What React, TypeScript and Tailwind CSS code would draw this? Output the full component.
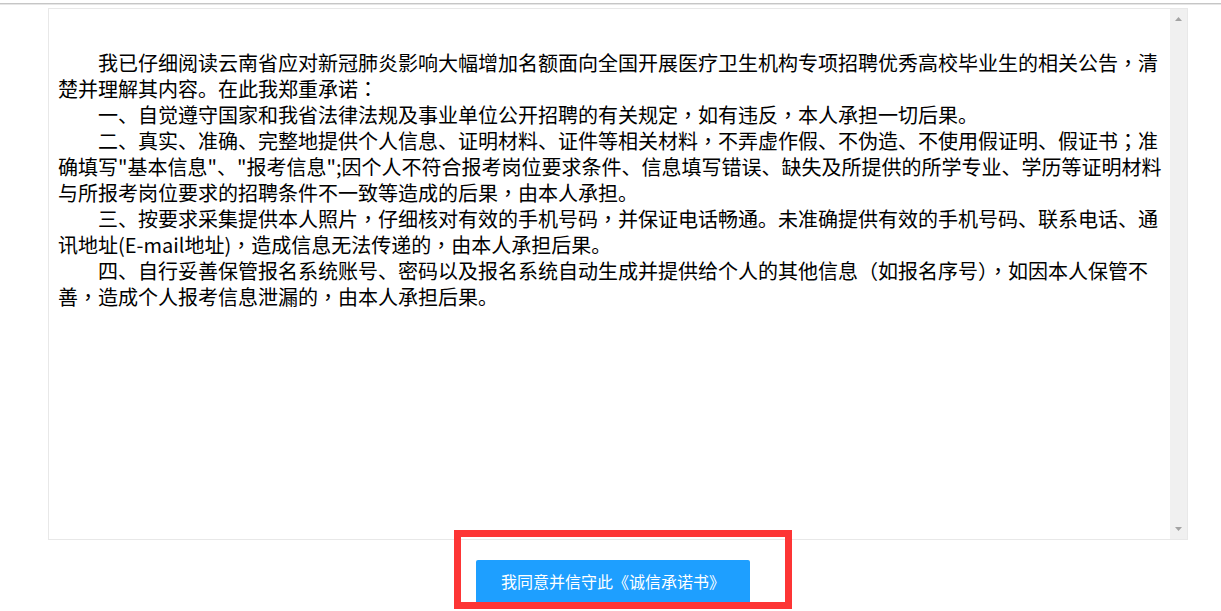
import React from "react";

const lines: { text: string; indent?: boolean; justify?: boolean }[] = [
  { text: "我已仔细阅读云南省应对新冠肺炎影响大幅增加名额面向全国开展医疗卫生机构专项招聘优秀高校毕业生的相关公告，清", indent: true },
  { text: "楚并理解其内容。在此我郑重承诺：" },
  { text: "一、自觉遵守国家和我省法律法规及事业单位公开招聘的有关规定，如有违反，本人承担一切后果。", indent: true },
  { text: "二、真实、准确、完整地提供个人信息、证明材料、证件等相关材料，不弄虚作假、不伪造、不使用假证明、假证书；准", indent: true },
  { text: "确填写\"基本信息\"、\"报考信息\";因个人不符合报考岗位要求条件、信息填写错误、缺失及所提供的所学专业、学历等证明材料", justify: true },
  { text: "与所报考岗位要求的招聘条件不一致等造成的后果，由本人承担。" },
  { text: "三、按要求采集提供本人照片，仔细核对有效的手机号码，并保证电话畅通。未准确提供有效的手机号码、联系电话、通", indent: true },
  { text: "讯地址(E-mail地址)，造成信息无法传递的，由本人承担后果。" },
  { text: "四、自行妥善保管报名系统账号、密码以及报名系统自动生成并提供给个人的其他信息（如报名序号），如因本人保管不", indent: true },
  { text: "善，造成个人报考信息泄漏的，由本人承担后果。" },
];

function renderText(t: string) {
  const parts = t.split(/([，；：])/);
  return parts.map((p, i) =>
    /^[，；：]$/.test(p) ? (
      <span key={i} className="font-['Noto_Sans_CJK_TC',sans-serif]">
        {p}
      </span>
    ) : (
      <React.Fragment key={i}>{p}</React.Fragment>
    )
  );
}

export default function App() {
  return (
    <div className="relative h-[611px] w-[1221px] overflow-hidden bg-white font-['Noto_Sans_CJK_SC','Noto_Sans',sans-serif]">
      <div className="mt-[3px] h-px bg-[#c6c6c6]" />
      <div className="h-px bg-[#e6e6e6]" />
      <div className="ml-[48px] mt-[3px] flex h-[532px] w-[1140px] border border-[#e8e8e8]">
        <div className="flex-1 pl-[9px] pt-[41px]">
          <div className="w-[1100px] text-[20px] leading-[26px] text-black">
            {lines.map((l, i) => (
              <div
                key={i}
                className={
                  "h-[26px] whitespace-nowrap " +
                  (l.indent ? "pl-10 " : "") +
                  (l.justify ? "text-justify [text-align-last:justify] " : "")
                }
              >
                {renderText(l.text)}
              </div>
            ))}
          </div>
        </div>
        <div className="flex w-[17px] flex-col items-center justify-between bg-[#f0f0f0] pb-[8px] pt-[8px]">
          <svg width="7" height="4" viewBox="0 0 7 4">
            <polygon points="3.5,0 7,4 0,4" fill="#a3a3a3" />
          </svg>
          <svg width="7" height="4" viewBox="0 0 7 4">
            <polygon points="0,0 7,0 3.5,4" fill="#a3a3a3" />
          </svg>
        </div>
      </div>
      <div className="mt-[20px] flex justify-center pl-[5px]">
        <button className="flex h-[44px] w-[274px] items-start justify-center rounded-[2px] bg-[#1e9fff] pt-[10px] text-[16px] leading-[22px] text-white">
          我同意并信守此《诚信承诺书》
        </button>
      </div>
      <div className="pointer-events-none absolute left-[454px] top-[530px] h-[79px] w-[338px] border-[7px] border-[#fd3535]" />
    </div>
  );
}
